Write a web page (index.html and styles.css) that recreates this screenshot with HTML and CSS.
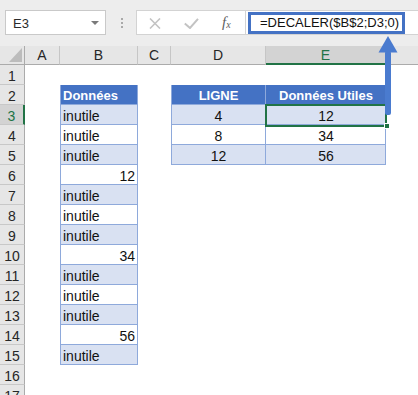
FILE: index.html
```html
<!DOCTYPE html>
<html lang="fr">
<head>
<meta charset="utf-8">
<title>DECALER</title>
<link rel="stylesheet" href="styles.css">
</head>
<body>
<div class="app">
  <div class="topbar">
    <div class="namebox"><span class="nb-text">E3</span><span class="caret"></span></div>
    <div class="dots"><i></i><i></i><i></i></div>
    <div class="fxbox">
      <svg class="ico-x" width="12" height="11" viewBox="0 0 12 11"><path d="M1 0.5 L11 10.5 M11 0.5 L1 10.5" stroke="#c3c3c3" stroke-width="1.6" fill="none"/></svg>
      <svg class="ico-ok" width="15" height="11" viewBox="0 0 15 11"><path d="M0.8 5.5 L6 10 L14 0.8" stroke="#c3c3c3" stroke-width="2" fill="none"/></svg>
      <span class="fx">f<sub>x</sub></span>
    </div>
    <div class="formula"><div class="formula-text">=DECALER($B$2;D3;0)</div></div>
  </div>

  <div class="grid">
    <div class="corner"><svg width="13" height="14" viewBox="0 0 13 14"><polygon points="13,0 13,14 0,14" fill="#bcbcbc"/></svg></div>
    <div class="ch">A</div><div class="ch">B</div><div class="ch">C</div><div class="ch">D</div><div class="ch sel">E</div><div class="ch last"></div>

    <div class="rh">1</div><div class="c"></div><div class="c"></div><div class="c"></div><div class="c"></div><div class="c"></div><div class="c"></div>

    <div class="rh">2</div><div class="c"></div><div class="t th lft">Données</div><div class="c"></div><div class="t th lft ctr">LIGNE</div><div class="t th ctr">Données Utiles</div><div class="c"></div>

    <div class="rh sel">3</div><div class="c"></div><div class="t band lft">inutile</div><div class="c"></div><div class="t band lft ctr">4</div><div class="t band ctr active">12<span class="selbox"></span><span class="handle"></span></div><div class="c"></div>

    <div class="rh">4</div><div class="c"></div><div class="t lft">inutile</div><div class="c"></div><div class="t lft ctr">8</div><div class="t ctr">34</div><div class="c"></div>

    <div class="rh">5</div><div class="c"></div><div class="t band lft">inutile</div><div class="c"></div><div class="t band lft ctr">12</div><div class="t band ctr">56</div><div class="c"></div>

    <div class="rh">6</div><div class="c"></div><div class="t lft num">12</div><div class="c"></div><div class="c"></div><div class="c"></div><div class="c"></div>

    <div class="rh">7</div><div class="c"></div><div class="t band lft">inutile</div><div class="c"></div><div class="c"></div><div class="c"></div><div class="c"></div>

    <div class="rh">8</div><div class="c"></div><div class="t lft">inutile</div><div class="c"></div><div class="c"></div><div class="c"></div><div class="c"></div>

    <div class="rh">9</div><div class="c"></div><div class="t band lft">inutile</div><div class="c"></div><div class="c"></div><div class="c"></div><div class="c"></div>

    <div class="rh">10</div><div class="c"></div><div class="t lft num">34</div><div class="c"></div><div class="c"></div><div class="c"></div><div class="c"></div>

    <div class="rh">11</div><div class="c"></div><div class="t band lft">inutile</div><div class="c"></div><div class="c"></div><div class="c"></div><div class="c"></div>

    <div class="rh">12</div><div class="c"></div><div class="t lft">inutile</div><div class="c"></div><div class="c"></div><div class="c"></div><div class="c"></div>

    <div class="rh">13</div><div class="c"></div><div class="t band lft">inutile</div><div class="c"></div><div class="c"></div><div class="c"></div><div class="c"></div>

    <div class="rh">14</div><div class="c"></div><div class="t lft num">56</div><div class="c"></div><div class="c"></div><div class="c"></div><div class="c"></div>

    <div class="rh">15</div><div class="c"></div><div class="t band lft">inutile</div><div class="c"></div><div class="c"></div><div class="c"></div><div class="c"></div>

    <div class="rh">16</div><div class="c"></div><div class="c"></div><div class="c"></div><div class="c"></div><div class="c"></div><div class="c"></div>

    <div class="rh">17</div><div class="c"></div><div class="c"></div><div class="c"></div><div class="c"></div><div class="c"></div><div class="c"></div>
  </div>

  <svg class="arrow" width="22" height="84" viewBox="0 0 22 84">
    <polygon points="11,2 20.5,18.5 1.5,18.5" fill="#4a7bcf"/>
    <rect x="8" y="17" width="6" height="64" rx="2" fill="#4a7bcf"/>
  </svg>
</div>
</body>
</html>
```

FILE: styles.css
```css
* { box-sizing: border-box; }
html, body { margin: 0; padding: 0; }
body {
  width: 418px;
  height: 395px;
  overflow: hidden;
  background: #ffffff;
  font-family: "Liberation Sans", Arial, sans-serif;
  color: #000;
}
.app {
  position: relative;
  width: 418px;
  height: 395px;
  overflow: hidden;
}

/* ---------- top bar ---------- */
.topbar {
  display: flex;
  align-items: flex-start;
  height: 46px;
  padding-top: 10px;
  background: #ededed;
}
.namebox {
  margin-left: 5px;
  width: 101px;
  height: 25px;
  background: #fff;
  border: 1px solid #c9c9c9;
  display: flex;
  align-items: center;
  justify-content: space-between;
  padding: 2px 6px 0 7px;
  font-size: 13px;
  color: #2b2b2b;
}
.caret {
  width: 0;
  height: 0;
  border-left: 4px solid transparent;
  border-right: 4px solid transparent;
  border-top: 4px solid #7a7a7a;
  margin-top: -2px;
}
.dots {
  margin-left: 14px;
  margin-top: 8px;
  width: 4px;
  display: flex;
  flex-direction: column;
  align-items: center;
  gap: 2px;
}
.dots i {
  display: block;
  width: 2px;
  height: 2px;
  background: #a9a9a9;
}
.fxbox {
  margin-left: 12px;
  width: 110px;
  height: 25px;
  background: #fff;
  border: 1px solid #d3d3d3;
  display: flex;
  align-items: center;
  padding-left: 12px;
}
.ico-x { margin-top: 1px; }
.ico-ok { margin-left: 23px; margin-top: 1px; }
.fx {
  margin-left: 23px;
  font-family: "Liberation Serif", "DejaVu Serif", serif;
  font-style: italic;
  font-size: 15px;
  color: #5f5f5f;
  line-height: 1;
}
.fx sub {
  font-size: 10px;
  vertical-align: -1px;
}
.formula {
  flex: 1;
  height: 25px;
  margin-left: 0;
  background: #fff;
  border-top: 1px solid #d3d3d3;
  border-bottom: 1px solid #d3d3d3;
  padding: 1px 0 0 2px;
}
.formula-text {
  width: 157px;
  height: 22px;
  border: 3px solid #4472c4;
  padding-left: 9px;
  font-size: 13px;
  line-height: 16px;
  color: #111;
  white-space: nowrap;
}

/* ---------- grid ---------- */
.grid {
  display: grid;
  grid-template-columns: 25px 35px 78px 33px 95px 120px 32px;
  grid-template-rows: 19px repeat(17, 20px);
  font-size: 14px;
}
.corner {
  background: #e6e6e6;
  border-right: 1px solid #ababab;
  border-bottom: 1px solid #ababab;
  display: flex;
  justify-content: flex-end;
  align-items: flex-end;
  padding: 0 2px 2px 0;
}
.ch {
  background: #e6e6e6;
  border-right: 1px solid #c6c6c6;
  border-bottom: 1px solid #ababab;
  text-align: center;
  line-height: 19px;
  font-size: 14px;
  color: #262626;
}
.ch.last { border-right: none; }
.ch.sel {
  background: #d3d3d3;
  color: #217346;
  border-bottom: 2px solid #217346;
  border-right-color: #c6c6c6;
}
.rh {
  background: #e6e6e6;
  border-right: 1px solid #ababab;
  border-bottom: 1px solid #c8c8c8;
  text-align: center;
  line-height: 20px;
  padding-top: 1px;
  font-size: 14px;
  color: #262626;
}
.rh.sel {
  background: #d3d3d3;
  color: #217346;
  border-right: 2px solid #217346;
}
.c { background: #fff; }

.t {
  background: #fff;
  box-shadow: inset -1px -1px 0 #8ea9db;
  line-height: 20px;
  padding: 1px 3px 0 3px;
  white-space: nowrap;
  font-size: 14px;
  color: #111;
}
.t.lft { box-shadow: inset -1px -1px 0 #8ea9db, inset 1px 0 0 #8ea9db; }
.t.band { background: #d9e1f2; }
.t.th {
  background: #4472c4;
  color: #fff;
  font-weight: bold;
  font-size: 13px;
}
.t.ctr { text-align: center; }
.t.num { text-align: right; }

.active { position: relative; }
.selbox {
  position: absolute;
  left: -1px;
  top: -1px;
  right: -1px;
  bottom: -2px;
  border: 2px solid #217346;
}
.handle {
  position: absolute;
  right: -4px;
  bottom: -4px;
  width: 6px;
  height: 6px;
  background: #217346;
  border: 1px solid #fff;
}

.arrow {
  position: absolute;
  left: 377px;
  top: 34px;
}
```
